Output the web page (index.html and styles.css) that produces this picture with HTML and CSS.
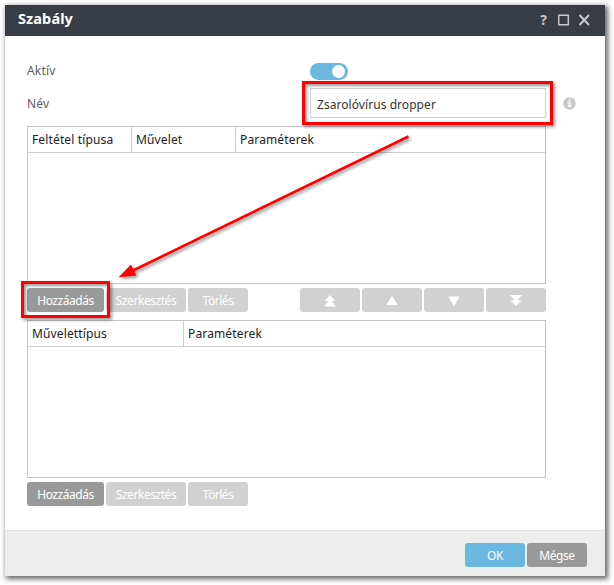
FILE: index.html
```html
<!DOCTYPE html>
<html lang="hu">
<head>
<meta charset="utf-8">
<title>Szabály</title>
<link rel="stylesheet" href="styles.css">
</head>
<body>
<main class="window">
  <header class="titlebar">
    <h1 class="title">Szabály</h1>
    <div class="controls">
      <span class="help">?</span>
      <svg class="control-icons" width="32" height="12" viewBox="0 0 32 12" fill="none" stroke="#c8c9cb"><path stroke-width="1.5" d="M.7 1.2h9.6v9.6H.7z"/><path stroke-width="2" d="M21.500 1l9.500 10M31 1l-9.500 10"/></svg>
    </div>
  </header>
  <section class="content">
    <div class="field field-active"><span class="label">Aktív</span><span class="toggle"><span class="knob"></span></span></div>
    <div class="field field-name">
      <span class="label">Név</span>
      <div class="input"><span class="value">Zsarolóvírus dropper</span><span class="mark mark-input"></span></div>
      <svg class="info" width="13" height="13" viewBox="0 0 13 13"><circle cx="6.5" cy="6.5" r="6.2" fill="#c9c9c9"/><path fill="#fff" d="M5.5 2.8h2v1.5h-2zM4.7 5.2h2.8v3.6h.9V10H4.7V8.800h.9V6.400h-.9z"/></svg>
    </div>
    <div class="table conditions">
      <div class="row"><span class="cell condition-type">Feltétel típusa</span><span class="cell">Művelet</span><span class="cell">Paraméterek</span></div>
    </div>
    <div class="toolbar">
      <div class="group"><div class="button add">Hozzáadás<span class="mark mark-add"></span></div><div class="button edit disabled">Szerkesztés</div><div class="button disabled">Törlés</div></div>
      <div class="group">
        <div class="button disabled"><svg width="12" height="12"><path fill="#fff" d="M6 0l5.500 6H7.500L12 11.500H0L4.500 6H.5z"/></svg></div>
        <div class="button disabled"><svg width="12" height="12"><path fill="#fff" d="M6 .5l5.700 9.500H.3z"/></svg></div>
        <div class="button disabled"><svg width="12" height="12"><path fill="#fff" d="M.3 1.500h11.400L6 11z"/></svg></div>
        <div class="button disabled"><svg width="12" height="12"><path fill="#fff" d="M0 0h12L7.500 5.200h4L6 11.200.5 5.200h4z"/></svg></div>
      </div>
    </div>
    <div class="table actions">
      <div class="row"><span class="cell action-type">Művelettípus</span><span class="cell">Paraméterek</span></div>
    </div>
    <div class="toolbar">
      <div class="group"><div class="button add">Hozzáadás</div><div class="button edit disabled">Szerkesztés</div><div class="button disabled">Törlés</div></div>
    </div>
  </section>
  <footer class="footer"><div class="button primary">OK</div><div class="button">Mégse</div></footer>
</main>
<svg class="arrow" width="614" height="585" viewBox="0 0 614 585"><path stroke="#f00" stroke-width="2.600" d="M408.500 136.500L132 271"/><path fill="#f00" d="M118.500 277.200l12.500-12.700 5.300 10.900z"/></svg>
</body>
</html>
```
FILE: styles.css
```css
* { box-sizing: border-box; }
body { margin: 0; padding: 5px; height: 585px; overflow: hidden; background: #fff; font: 12px/18px "Noto Sans", "Open Sans", sans-serif; color: #222; }
.window { width: 600px; height: 571px; display: flex; flex-direction: column; background: #fff; box-shadow: 2px 2px 5px 1px rgba(0, 0, 0, .6); }
.titlebar { height: 31px; flex: none; background: #383c44; display: flex; justify-content: space-between; padding: 0 15px 0 13px; }
.title { margin: 0; color: #fff; font-size: 14.5px; line-height: 27px; font-weight: 700; letter-spacing: .1px; }
.controls { display: flex; color: #c8c9cb; }
.help { font-weight: 700; font-size: 14px; line-height: 29px; margin-right: 11px; }
.control-icons { margin-top: 9px; }
.content { flex: 1; padding: 0 22px; }
.field { display: flex; }
.field-active { padding-top: 26px; height: 52px; }
.field-name { height: 38px; }
.label { width: 283px; color: #5c5c5c; letter-spacing: .2px; }
.field-name .label { padding-top: 7px; }
.toggle { width: 38px; height: 17px; margin-top: 1px; border-radius: 9px; background: #6ab7e0; display: flex; justify-content: flex-end; padding: 2px 3px; }
.knob { width: 13px; height: 13px; border-radius: 50%; background: #fff; }
.input { position: relative; width: 236px; height: 30px; border: 1px solid #d2d2d2; padding: 7px 6px 5px; letter-spacing: .06px; color: #333; }
.info { margin: 9px 0 0 17px; }
.mark { position: absolute; border: 3px solid #f00; box-shadow: 2px 2px 3px rgba(0, 0, 0, .4), inset 2px 2px 3px rgba(0, 0, 0, .4); }
.mark-input { left: -9px; top: -8px; width: 251px; height: 44px; }
.mark-add { left: -6px; top: -7px; width: 89px; height: 37px; z-index: 1; }
.table { width: 519px; height: 158px; border: 1px solid #c6c6c6; }
.row { display: flex; height: 26px; border-bottom: 1px solid #d0d0d0; }
.cell { width: 104px; padding: 4px; line-height: 18px; color: #222; white-space: nowrap; letter-spacing: .14px; }
.cell + .cell { border-left: 1px solid #d0d0d0; }
.condition-type { width: 103px; }
.conditions .cell:last-child { flex: 1; }
.action-type { width: 155px; }
.actions .cell:last-child { flex: 1; }
.toolbar { display: flex; justify-content: space-between; width: 519px; height: 36px; padding-top: 4px; }
.group { display: flex; gap: 2px; }
.button { position: relative; display: flex; align-items: center; justify-content: center; width: 60px; height: 24px; padding-top: 1px; border-radius: 3px; background: #999; color: #fff; white-space: nowrap; letter-spacing: -.45px; }
.add { width: 77px; }
.edit { width: 80px; }
.disabled { background: #d1d1d1; }
.primary { background: #6ab7e0; }
.footer { height: 46px; flex: none; display: flex; justify-content: flex-end; gap: 2px; padding: 12px 18px 0; border-top: 1px solid #dedede; background: #ededed; }
.arrow { position: absolute; left: 0; top: 0; z-index: 2; filter: drop-shadow(2px 2px 1.500px rgba(0, 0, 0, .4)); }
```
